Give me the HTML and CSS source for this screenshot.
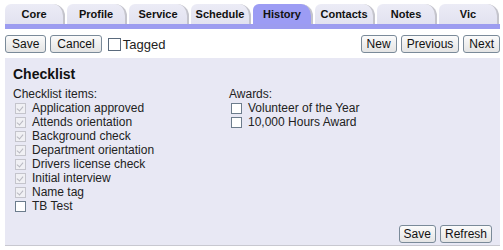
FILE: index.html
```html
<!DOCTYPE html>
<html>
<head>
<meta charset="utf-8">
<link rel="stylesheet" href="styles.css">
</head>
<body>
<div class="page">
  <div class="tabs">
    <div class="tab">Core</div>
    <div class="tab">Profile</div>
    <div class="tab">Service</div>
    <div class="tab">Schedule</div>
    <div class="tab active">History</div>
    <div class="tab">Contacts</div>
    <div class="tab">Notes</div>
    <div class="tab">Vic</div>
  </div>
  <div class="tabbar"></div>
  <div class="toolbar">
    <div class="group">
      <button class="btn">Save</button>
      <button class="btn">Cancel</button>
      <label class="tagged"><span class="box"></span>Tagged</label>
    </div>
    <div class="group nav">
      <button class="btn">New</button>
      <button class="btn">Previous</button>
      <button class="btn">Next</button>
    </div>
  </div>
  <div class="panel">
    <h2 class="title">Checklist</h2>
    <div class="cols">
      <div class="col">
        <div class="label">Checklist items:</div>
        <div class="item"><span class="cb done"></span>Application approved</div>
        <div class="item"><span class="cb done"></span>Attends orientation</div>
        <div class="item"><span class="cb done"></span>Background check</div>
        <div class="item"><span class="cb done"></span>Department orientation</div>
        <div class="item"><span class="cb done"></span>Drivers license check</div>
        <div class="item"><span class="cb done"></span>Initial interview</div>
        <div class="item"><span class="cb done"></span>Name tag</div>
        <div class="item"><span class="cb"></span>TB Test</div>
      </div>
      <div class="col">
        <div class="label">Awards:</div>
        <div class="item"><span class="cb"></span>Volunteer of the Year</div>
        <div class="item"><span class="cb"></span>10,000 Hours Award</div>
      </div>
    </div>
    <div class="footer">
      <button class="btn">Save</button>
      <button class="btn">Refresh</button>
    </div>
  </div>
</div>
</body>
</html>
```
FILE: styles.css
```css
html, body { margin: 0; padding: 0; background: #fff; }
body { font-family: "Liberation Sans", Arial, sans-serif; font-size: 12px; color: #222; }
.page { padding: 4px 3px 0 5px; }
.tabs { display: flex; gap: 2px; height: 20px; }
.tab {
  width: 60px; height: 20px; box-sizing: border-box;
  background: linear-gradient(#ececf6, #e2e2f0); border-radius: 6px 12px 0 0;
  border-right: 2px solid #c4c4cc;
  font-weight: bold; font-size: 11px; color: #111;
  display: flex; align-items: center; justify-content: center;
}
.tab.active { background: #9c9cf4; border-right-color: #c4c4cc; }
.tabbar { height: 5px; background: #9c9cf0; }
.toolbar { display: flex; justify-content: space-between; align-items: center; padding: 6px 0 5px 0; }
.group { display: flex; align-items: center; gap: 4px; }
.btn {
  font-family: "Liberation Sans", Arial, sans-serif; font-size: 12px; color: #111;
  height: 18px; padding: 0 6px; margin: 0;
  background: linear-gradient(#fbfbfb, #e4e4e4);
  border: 1px solid #7a8a99; border-radius: 3px;
}
.nav .btn { padding: 0 5px; }
.tagged { display: flex; align-items: center; font-size: 13px; margin-left: 2px; }
.box { width: 11px; height: 11px; border: 1px solid #5a6a7c; background: #fff; margin-right: 2px; }
.panel { background: #e8e8f4; border-bottom: 1px solid #c8c8d0; height: 188px; box-sizing: border-box; padding: 6px 8px 0 8px; display: flex; flex-direction: column; }
.title { margin: 0; font-size: 14px; font-weight: bold; color: #111; height: 20px; line-height: 20px; }
.cols { display: flex; margin-top: 4px; }
.col:first-child { width: 216px; }
.label { height: 13px; line-height: 13px; color: #222; }
.item { display: flex; align-items: center; height: 14px; line-height: 14px; }
.cb { width: 9px; height: 9px; border: 1px solid #6c7c8c; background: #fff; margin: 0 6px 0 2px; position: relative; }
.cb.done { border-color: #c4c4cc; background: #f0f0f4; }
.cb.done::after { content: ""; position: absolute; left: 2px; top: 1px; width: 3px; height: 5px; border: solid #b8b8c0; border-width: 0 1px 1px 0; transform: rotate(40deg); }
.footer { margin-top: auto; display: flex; justify-content: flex-end; gap: 4px; padding: 0 0 2px 0; }
.footer .btn { padding: 0 4px; }
```
